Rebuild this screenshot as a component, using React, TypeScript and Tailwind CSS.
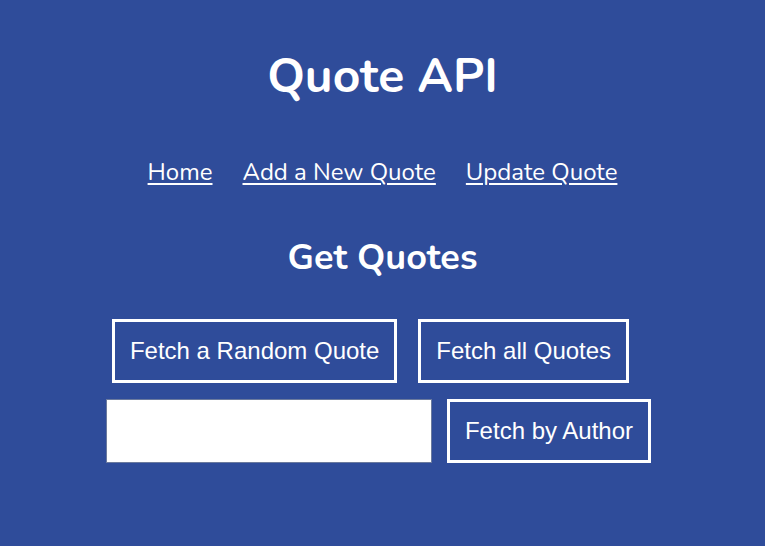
import React from "react";

const navLinks = ["Home", "Add a New Quote", "Update Quote"];

export default function App() {
  return (
    <div className="min-h-[546px] w-full bg-[#2f4c9a] text-white flex flex-col items-center font-['Nunito','Lato','Noto_Sans',sans-serif]">
      <h1 className="mt-[45px] text-[48px] leading-[62px] font-bold">Quote API</h1>

      <nav className="mt-[50px] flex gap-[30px] text-[24px] leading-[30px]">
        {navLinks.map((link) => (
          <a key={link} href="#" className="underline underline-offset-[3px] decoration-[1.5px]">
            {link}
          </a>
        ))}
      </nav>

      <h2 className="mt-[47px] text-[36px] leading-[48px] font-bold">Get Quotes</h2>

      <div className="mt-[37px] flex flex-col items-center gap-[16px] font-['Liberation_Sans',Arial,sans-serif]">
        <div className="flex gap-[21px] pr-[24px]">
          <button className="h-[64px] px-[15px] border-[3px] border-white text-[24px]">
            Fetch a Random Quote
          </button>
          <button className="h-[64px] px-[15px] border-[3px] border-white text-[24px]">
            Fetch all Quotes
          </button>
        </div>
        <div className="flex gap-[15px] pr-[8px]">
          <input
            type="text"
            className="h-[64px] w-[326px] bg-white border border-[#6b7a9e] text-black text-[22px] px-2"
          />
          <button className="h-[64px] px-[15px] border-[3px] border-white text-[24px]">
            Fetch by Author
          </button>
        </div>
      </div>
    </div>
  );
}
